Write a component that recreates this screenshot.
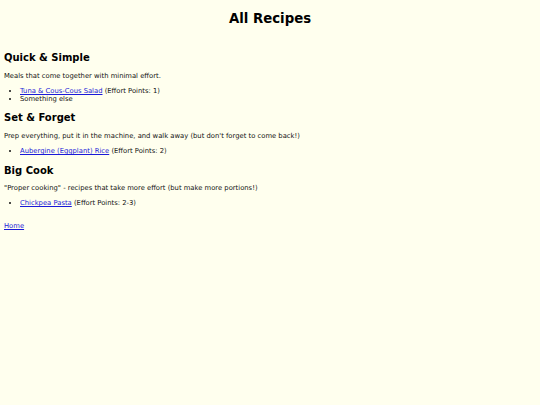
import React from "react";

type Recipe = {
    name?: string;
    points?: string;
    text?: string;
};

type Section = {
    title: string;
    blurb: string;
    recipes: Recipe[];
};

// the recipe groups shown on the page
const sections: Section[] = [
    {
        title: "Quick & Simple",
        blurb: "Meals that come together with minimal effort.",
        recipes: [
            { name: "Tuna & Cous-Cous Salad", points: "1" },
            { text: "Something else" },
        ],
    },
    {
        title: "Set & Forget",
        blurb: "Prep everything, put it in the machine, and walk away (but don't forget to come back!)",
        recipes: [{ name: "Aubergine (Eggplant) Rice", points: "2" }],
    },
    {
        title: "Big Cook",
        blurb: "\"Proper cooking\" - recipes that take more effort (but make more portions!)",
        recipes: [{ name: "Chickpea Pasta", points: "2-3" }],
    },
];

const RecipeSection = ({ section }: { section: Section }) => {
    return (
        <section>
            <h2 className="text-[10px] leading-[13px] font-bold text-black mb-[7.3px]">{section.title}</h2>
            <p className="mb-[7.6px]">{section.blurb}</p>
            <ul className="list-disc pl-[16px] mb-[8.2px]">
                {section.recipes.map((recipe, i) => (
                    <li key={i}>
                        {recipe.name ? (
                            <>
                                <a href="#" className="text-[#1a1ad8] underline">{recipe.name}</a>
                                {` (Effort Points: ${recipe.points})`}
                            </>
                        ) : (
                            recipe.text
                        )}
                    </li>
                ))}
            </ul>
        </section>
    );
};

const App = () => {
    return (
        <div className="min-h-screen bg-[#ffffee] px-[4px] pt-[10.4px] text-[6.8px] leading-[8px] text-[#111] font-['DejaVu_Sans',sans-serif]">
            <h1 className="text-center text-[13.3px] leading-[17px] font-bold text-black mb-[24px]">All Recipes</h1>

            {sections.map((section) => (
                <RecipeSection key={section.title} section={section} />
            ))}

            <a href="#" className="block w-fit mt-[14.3px] text-[#1a1ad8] underline">Home</a>
        </div>
    );
};

export default App;
